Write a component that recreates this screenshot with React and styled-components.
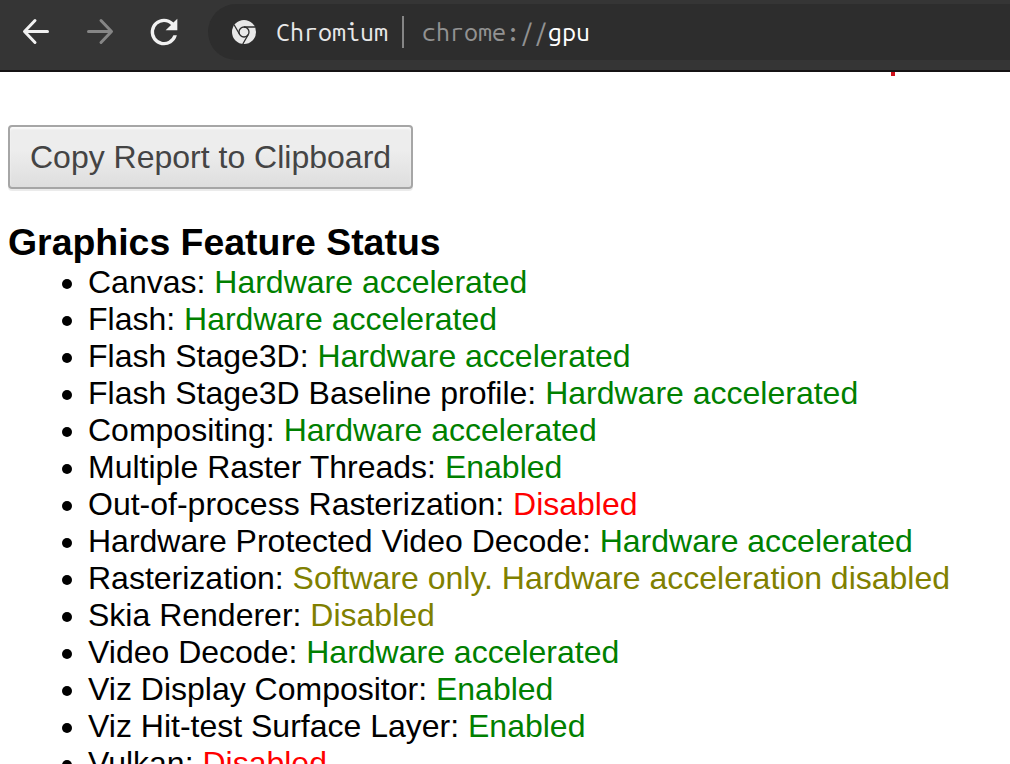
import React from 'react'
import styled, {createGlobalStyle} from 'styled-components'

const features = [
    {name: 'Canvas', status: 'Hardware accelerated', level: 'good'},
    {name: 'Flash', status: 'Hardware accelerated', level: 'good'},
    {name: 'Flash Stage3D', status: 'Hardware accelerated', level: 'good'},
    {name: 'Flash Stage3D Baseline profile', status: 'Hardware accelerated', level: 'good'},
    {name: 'Compositing', status: 'Hardware accelerated', level: 'good'},
    {name: 'Multiple Raster Threads', status: 'Enabled', level: 'good'},
    {name: 'Out-of-process Rasterization', status: 'Disabled', level: 'bad'},
    {name: 'Hardware Protected Video Decode', status: 'Hardware accelerated', level: 'good'},
    {name: 'Rasterization', status: 'Software only. Hardware acceleration disabled', level: 'warn'},
    {name: 'Skia Renderer', status: 'Disabled', level: 'warn'},
    {name: 'Video Decode', status: 'Hardware accelerated', level: 'good'},
    {name: 'Viz Display Compositor', status: 'Enabled', level: 'good'},
    {name: 'Viz Hit-test Surface Layer', status: 'Enabled', level: 'good'},
    {name: 'Vulkan', status: 'Disabled', level: 'bad'},
]

const levelColors = {
    good: '#008000',
    warn: '#808000',
    bad: '#ff0000',
}

const BackIcon = () => (
    <svg width="40" height="40" viewBox="0 0 40 40" fill="none" stroke="currentColor" strokeWidth="3"
         strokeLinecap="round" strokeLinejoin="round">
        <path d="M31.5 19.5H9M19 8.5L8.5 19.5L19 30.5"/>
    </svg>
)

const ForwardIcon = () => (
    <svg width="40" height="40" viewBox="0 0 40 40" fill="none" stroke="currentColor" strokeWidth="3"
         strokeLinecap="round" strokeLinejoin="round">
        <path d="M8.5 19.5H31M21 8.5L31.5 19.5L21 30.5"/>
    </svg>
)

const ReloadIcon = () => (
    <svg width="40" height="40" viewBox="0 0 24 24" fill="currentColor">
        <path d="M17.65 6.35A7.96 7.96 0 0 0 12 4a8 8 0 1 0 7.73 10h-2.08A6 6 0 1 1 12 6c1.66 0 3.14.69 4.22 1.78L13 11h7V4z"/>
    </svg>
)

const ChromiumIcon = () => (
    <svg width="24" height="24" viewBox="0 0 24 24" fill="none" stroke="#2d2d2d" strokeWidth="1.3">
        <circle cx="12" cy="12" r="12" fill="#e8e8e8" stroke="none"/>
        <circle cx="12" cy="12" r="5"/>
        <path d="M12 7H23M7.7 14.5L2.2 5M16.3 14.5L10.8 24"/>
    </svg>
)

const App = () => (
    <Page>
        <GlobalStyle/>
        <Toolbar>
            <NavButton type="button" aria-label="Back"><BackIcon/></NavButton>
            <NavButton type="button" aria-label="Forward" disabled><ForwardIcon/></NavButton>
            <NavButton type="button" aria-label="Reload"><ReloadIcon/></NavButton>
            <Omnibox>
                <ChromiumIcon/>
                <SiteName>Chromium</SiteName>
                <Url><Scheme>chrome://</Scheme>gpu</Url>
            </Omnibox>
        </Toolbar>
        <Content>
            <ScrolledNotice/>
            <CopyButton type="button">Copy Report to Clipboard</CopyButton>
            <Heading>Graphics Feature Status</Heading>
            <FeatureList>
                {features.map(({name, status, level}) => (
                    <li key={name}>
                        {name}: <Status $level={level}>{status}</Status>
                    </li>
                ))}
            </FeatureList>
        </Content>
    </Page>
)

const GlobalStyle = createGlobalStyle`
    body {
        margin: 0;
        background: #fff;
        color: #000;
        font-family: "Liberation Sans", Arial, sans-serif;
    }
`

const Page = styled.div`
    display: flex;
    flex-direction: column;
    height: 100vh;
    overflow: hidden;
`

const Toolbar = styled.header`
    display: flex;
    flex: none;
    align-items: center;
    gap: 24px;
    padding: 4px 0 10px 16px;
    background: #353535;
    border-bottom: 2px solid #151314;
`

const NavButton = styled.button`
    display: flex;
    padding: 0;
    border: 0;
    background: none;
    color: #f1f1f1;

    &:disabled {
        color: #868686;
    }
`

const Omnibox = styled.div`
    display: flex;
    flex: 1;
    align-items: center;
    height: 56px;
    padding-left: 24px;
    border-radius: 28px 0 0 28px;
    background: #2d2d2d;
    font-family: "Ubuntu Mono", "DejaVu Sans Mono", monospace;
    font-size: 25px;
    line-height: 32px;
    white-space: nowrap;
`

const SiteName = styled.span`
    margin-left: 20px;
    padding-right: 14px;
    border-right: 2px solid #858585;
    color: #e8e8e8;
`

const Url = styled.span`
    margin-left: 18px;
    color: #fff;
`

const Scheme = styled.span`
    color: #929292;
`

const Content = styled.main`
    flex: 1;
    min-height: 0;
    padding: 0 8px;
    overflow: hidden;
    font-size: 32px;
    line-height: 37px;
`

/* tail of the notice that is scrolled under the toolbar */
const ScrolledNotice = styled.div`
    width: 4px;
    height: 4px;
    margin: 0 0 49px 883px;
    background: #d0101a;
`

const CopyButton = styled.button`
    display: block;
    padding: 12px 20px 11px;
    border: 2px solid #a6a6a6;
    border-radius: 4px;
    background: linear-gradient(#ededed, #ededed 38%, #dedede);
    box-shadow: 0 2px 0 rgba(0, 0, 0, 0.08), inset 0 2px 2px rgba(255, 255, 255, 0.75);
    color: #444;
    font: inherit;
`

/* keeps the default h3 text size */
const Heading = styled.h3`
    margin: 32px 0 0;
    line-height: 43px;
`

const FeatureList = styled.ul`
    margin: 0;
    padding-left: 80px;
`

const Status = styled.span`
    color: ${({$level}) => levelColors[$level]};
`

export default App
